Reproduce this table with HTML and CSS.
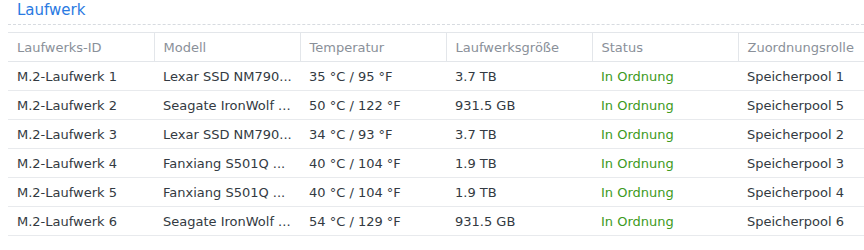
FILE: index.html
```html
<!DOCTYPE html>
<html lang="de">
<head>
<meta charset="utf-8">
<link rel="stylesheet" href="styles.css">
</head>
<body>
<div class="panel">
  <div class="title">Laufwerk</div>
  <div class="sep"></div>
  <table class="grid">
    <colgroup>
      <col class="c"><col class="c"><col class="c"><col class="c"><col class="c"><col class="last">
    </colgroup>
    <thead>
      <tr><th>Laufwerks-ID</th><th>Modell</th><th>Temperatur</th><th>Laufwerksgröße</th><th>Status</th><th>Zuordnungsrolle</th></tr>
    </thead>
    <tbody>
      <tr><td>M.2-Laufwerk 1</td><td>Lexar SSD NM790...</td><td>35 °C / 95 °F</td><td>3.7 TB</td><td class="ok">In Ordnung</td><td>Speicherpool 1</td></tr>
      <tr><td>M.2-Laufwerk 2</td><td>Seagate IronWolf ...</td><td>50 °C / 122 °F</td><td>931.5 GB</td><td class="ok">In Ordnung</td><td>Speicherpool 5</td></tr>
      <tr><td>M.2-Laufwerk 3</td><td>Lexar SSD NM790...</td><td>34 °C / 93 °F</td><td>3.7 TB</td><td class="ok">In Ordnung</td><td>Speicherpool 2</td></tr>
      <tr><td>M.2-Laufwerk 4</td><td>Fanxiang S501Q ...</td><td>40 °C / 104 °F</td><td>1.9 TB</td><td class="ok">In Ordnung</td><td>Speicherpool 3</td></tr>
      <tr><td>M.2-Laufwerk 5</td><td>Fanxiang S501Q ...</td><td>40 °C / 104 °F</td><td>1.9 TB</td><td class="ok">In Ordnung</td><td>Speicherpool 4</td></tr>
      <tr><td>M.2-Laufwerk 6</td><td>Seagate IronWolf ...</td><td>54 °C / 129 °F</td><td>931.5 GB</td><td class="ok">In Ordnung</td><td>Speicherpool 6</td></tr>
    </tbody>
  </table>
</div>
</body>
</html>
```
FILE: styles.css
```css
html, body {
  margin: 0;
  padding: 0;
  background: #ffffff;
  overflow: hidden;
}
body {
  font-family: "DejaVu Sans", Verdana, sans-serif;
  font-size: 13px;
  color: #414b55;
}
.panel {
  padding-left: 8px;
}
.title {
  color: #2a7ae2;
  font-size: 15px;
  line-height: 18px;
  padding: 1px 0 0 9px;
  height: 24px;
  box-sizing: border-box;
}
.sep {
  border-top: 1px dashed #d7dbe0;
  margin-bottom: 7px;
}
.grid {
  border-collapse: collapse;
  table-layout: fixed;
  width: 856px;
}
.grid col.c {
  width: 146px;
}
.grid col.last {
  width: 126px;
}
.grid th, .grid td {
  box-sizing: border-box;
  text-align: left;
  padding: 0 0 0 9px;
  height: 29px;
  white-space: nowrap;
  overflow: hidden;
  font-weight: normal;
}
.grid th {
  color: #8a9099;
  border-top: 1px solid #e3e6ea;
  border-bottom: 1px solid #e3e6ea;
  border-left: 1px solid #e3e6ea;
}
.grid th:first-child {
  border-left: none;
}
.grid td {
  border-bottom: 1px solid #e8eaed;
  color: #333a42;
}
.grid td.ok {
  color: #3d9a22;
}
```
